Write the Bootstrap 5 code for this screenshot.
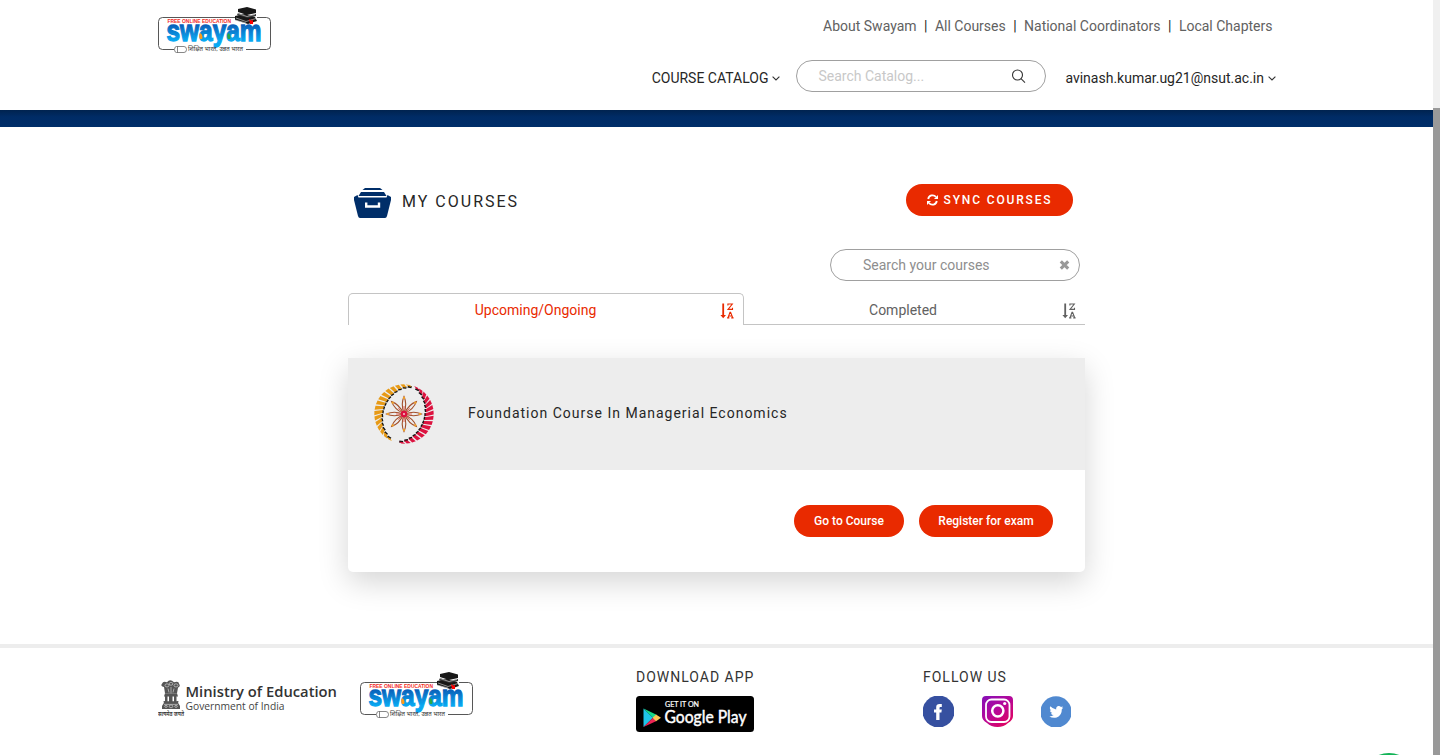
<!DOCTYPE html>
<html lang="en">
<head>
<meta charset="utf-8">
<meta name="viewport" content="width=device-width, initial-scale=1">
<title>My Courses - Swayam</title>
<link rel="stylesheet" href="https://cdn.jsdelivr.net/npm/bootstrap@5.3.0/dist/css/bootstrap.min.css">
<style>
  body { font-family: Roboto, "Liberation Sans", sans-serif; font-size: 14px; line-height: 20px; color: #262626; background: #fff; height: 755px; overflow: hidden; }
  svg { display: block; flex: none; }
  a { color: inherit; text-decoration: none; }
  .page { width: 1433px; height: 755px; }
  .scroll-track { width: 7px; height: 755px; background: #f0f0f0; padding-top: 108px; }
  .scroll-thumb { height: 647px; background: #999; }
  .site-header { height: 110px; padding: 5px 157px 0 158px; }
  .top-links { color: #616161; padding: 11px 3.500px 0 0; }
  .top-links span { color: #212121; width: 18.3px; text-align: center; }
  .main-nav { padding-top: 24px; }
  .search-pill { width: 250px; height: 32px; border: 1px solid #a0a0a0; border-radius: 16px; }
  .catalog-search { margin-left: 16px; padding: 0 19px 0 21px; color: #c8c8c8; }
  .course-search { margin-top: 31px; margin-right: 5px; padding: 0 9px 0 32px; color: #8e8e8e; }
  .account { margin-left: 19px; }
  .blue-bar { height: 17px; background: linear-gradient(#00234f, #002c66 7px, #002e69); }
  .content-col { width: 737px; height: 517px; padding-top: 57px; }
  .section-title { font-size: 16px; line-height: 22px; letter-spacing: 2px; margin-left: 11px; padding-top: 3px; }
  .btn-red { background: #e92a00; color: #fff; border: 0; border-radius: 16px; height: 32px; font-weight: 500; font-size: 12px; padding: 0; }
  .btn-red:hover { background: #c92400; color: #fff; }
  .btn-sync { width: 167px; letter-spacing: 1.85px; gap: 6px; }
  .tab-row { height: 32px; margin-top: 12px; }
  .tab-row svg { margin-top: 1px; }
  .tab-on { width: 396px; border: 1px solid #c4c4c4; border-bottom: 0; border-radius: 5px 5px 0 0; color: #e92a00; padding: 1px 9px 0 23px; }
  .tab-on span { margin: 0 30px 0 9px; }
  .tab-off { border-bottom: 1px solid #c4c4c4; padding: 3px 9px 0 0; color: #616161; }
  .course { margin-top: 33px; height: 214px; border-radius: 5px; box-shadow: 0 10px 30px rgba(0,0,0,.17); }
  .course-head { height: 112px; background: #ededed; padding-left: 26px; }
  .course-name { letter-spacing: 1px; margin-left: 34px; padding-bottom: 2px; }
  .course-actions { gap: 15px; padding: 35px 32px 0 0; }
  .site-footer { border-top: 4px solid #ededed; height: 111px; padding: 0 158px; }
  .foot-brand { width: 478px; padding-top: 22px; gap: 20px; }
  .foot-app { width: 287px; }
  .foot-label { letter-spacing: 1px; padding-top: 19px; margin-bottom: 9px; color: #333; }
  .socials { gap: 28px; }
  .chat-dot { position: fixed; left: 1362px; top: 753px; width: 54px; height: 54px; border-radius: 50%; background: #12b356; }
</style>
<script src="https://cdn.jsdelivr.net/npm/bootstrap@5.3.0/dist/js/bootstrap.bundle.min.js"></script>
</head>
<body>
<svg width="0" height="0" class="position-absolute">
  <defs>
    <linearGradient id="sw" x1="0" y1="0" x2="0" y2="1"><stop offset=".3" stop-color="#0a5fb8"/><stop offset=".8" stop-color="#08a9f2"/></linearGradient>
    <symbol id="swayam-logo" viewBox="0 0 114 50">
      <path d="M77 12.500H4.500Q.5 12.500 .5 16.500V40.500Q.5 44.500 4.500 44.500H16M88 44.500H108.500Q112.500 44.500 112.500 40.500V16.500Q112.500 12.500 108.500 12.500H99" fill="none" stroke="#444" stroke-width=".9"/>
      <path d="M18.500 41.500H26Q28.500 41.500 28.500 44.500T26 47.500H18.500Q16.500 47.500 16.500 44.500T18.500 41.500ZM19.500 41.500V47.500" fill="#fff" stroke="#555" stroke-width=".7"/>
      <text x="9.500" y="17.700" font-family="Liberation Sans, sans-serif" font-size="5.600" font-weight="700" fill="#f22a1e" textLength="63.500" lengthAdjust="spacingAndGlyphs">FREE ONLINE EDUCATION</text>
      <text x="8.500" y="36" font-family="Liberation Sans, sans-serif" font-size="29" font-weight="700" fill="url(#sw)" stroke="url(#sw)" stroke-width="1.300" textLength="95" lengthAdjust="spacingAndGlyphs">swayam</text>
      <path d="M42 34q-2-4 .5-6q3 3 1.500 6z" fill="#ff9c1a"/><path d="M70 34q-2-4 .5-6q3 3 1.500 6z" fill="#28a848"/>
      <path d="M80 4L89 2L98 4.500L98 8L89 10L80 7ZM77 11L86 9L97 12L99 16L90 19L77 15Z" fill="#171717"/>
      <path d="M80 8L89 11L98 9V11L90 13L79 10Z" fill="#333"/>
      <path d="M80 8.500L89 11.500L97 9.500M78 13L88 16.500L98 13.500M77 15L88 18" fill="none" stroke="#ddd" stroke-width=".6"/>
      <path d="M91 14L94 16L95 14V19H92Z" fill="#f00"/>
      <text x="30" y="46.400" font-family="Noto Sans, sans-serif" font-size="5.500" fill="#333" textLength="55" lengthAdjust="spacingAndGlyphs">शिक्षित भारत, उन्नत भारत</text>
    </symbol>
    <symbol id="sort-za" viewBox="0 0 14 16">
      <path d="M2.300 .500H4.100V12H6L3.200 15.200L.4 12H2.300Z" fill="currentColor"/>
      <path d="M7.900 2.600V1H12.300L8 6.400H12.500V4.700M7.100 14.900H9.400M11.200 14.900H13.600M8 14.700L10 9.400H10.600L12.700 14.700M8.800 13H11.900" fill="none" stroke="currentColor" stroke-width="1.100"/>
    </symbol>
    <symbol id="chev" viewBox="0 0 8 5"><path d="M.6 .6L4 4L7.400 .6" fill="none" stroke="#333" stroke-width="1.100"/></symbol>
  </defs>
</svg>

<div class="d-flex">
  <div class="page">
    <header class="site-header d-flex justify-content-between">
      <svg width="114" height="50"><use href="#swayam-logo"/></svg>
      <div class="d-flex flex-column">
        <nav class="top-links d-flex justify-content-end">
          <a href="#">About Swayam</a><span>|</span><a href="#">All Courses</a><span>|</span><a href="#">National Coordinators</a><span>|</span><a href="#">Local Chapters</a>
        </nav>
        <div class="main-nav d-flex justify-content-end">
          <a href="#" class="d-flex align-items-center pt-1">COURSE CATALOG <svg class="ms-1" width="8" height="5"><use href="#chev"/></svg></a>
          <div class="search-pill catalog-search d-flex align-items-center justify-content-between">
            <span>Search Catalog...</span>
            <svg width="15" height="15" fill="none" stroke="#333" stroke-width="1.100"><circle cx="6.500" cy="6" r="5"/><path d="M10 9.600L14 13.600"/></svg>
          </div>
          <a href="#" class="account d-flex align-items-center pt-1">avinash.kumar.ug21@nsut.ac.in <svg class="ms-1" width="8" height="5"><use href="#chev"/></svg></a>
        </div>
      </div>
    </header>
    <div class="blue-bar"></div>

    <main class="content-col mx-auto">
      <div class="d-flex align-items-start" style="padding:0 12px 0 6px">
        <svg class="mt-1" width="37" height="30" fill="#002e69"><path d="M11 0H26L28.500 2H8.500ZM7 4H30L32.500 8H4.500Z"/><path d="M0 9L3.500 7L4.500 9.500H32.500L33.500 7L37 9V12L33 28Q32.500 30 31 30H6Q4.500 30 4 28L0 12Z"/><path d="M12.200 14.500V18.500H25V14.500" fill="none" stroke="#fff" stroke-width="2.400"/></svg>
        <h1 class="section-title mb-0 fw-normal mt-1">MY COURSES</h1>
        <button class="btn btn-red btn-sync ms-auto d-flex align-items-center justify-content-center">
          <svg width="11" height="12" fill="none" stroke="#fff" stroke-width="1.800"><path d="M1.200 5A4.400 4.400 0 0 1 9 3M9.800 7A4.400 4.400 0 0 1 2 9"/><path d="M11 1V5H7ZM0 11V7H4Z" fill="#fff" stroke="none"/></svg>SYNC COURSES</button>
      </div>
      <div class="search-pill course-search d-flex align-items-center justify-content-between ms-auto">
        <span>Search your courses</span>
        <svg width="11" height="10"><path d="M1.800 1.300L9.200 8.700M9.200 1.300L1.800 8.700" stroke="#999" stroke-width="3.100"/></svg>
      </div>
      <div class="tab-row d-flex">
        <div class="tab-on d-flex align-items-center"><span class="flex-fill text-center">Upcoming/Ongoing</span><svg width="14" height="16"><use href="#sort-za"/></svg></div>
        <div class="tab-off flex-fill d-flex align-items-center"><span class="flex-fill text-center">Completed</span><svg width="14" height="16"><use href="#sort-za"/></svg></div>
      </div>
      <section class="course">
        <div class="course-head d-flex align-items-center">
          <svg id="seal" width="60" height="62" viewBox="0 0 60 62"></svg>
          <span class="course-name">Foundation Course In Managerial Economics</span>
        </div>
        <div class="course-actions d-flex justify-content-end">
          <button class="btn btn-red" style="width:110px">Go to Course</button>
          <button class="btn btn-red" style="width:134px">Register for exam</button>
        </div>
      </section>
    </main>

    <footer class="site-footer d-flex">
      <div class="foot-brand d-flex align-items-start">
        <svg width="182" height="48">
          <g transform="translate(0 7.500) scale(1 .79)">
          <g fill="#555"><path d="M6 12Q2 11 4 8Q5 4 9 6Q12 1 16 6Q21 4 21 8Q23 11 20 13L19 20H7Z"/><path d="M7 20H19L20 24H6Z M7 23H9.500V32H7ZM11 23H14.500V32H11ZM16 23H18.500V32H16Z"/><path d="M6 32Q4 29 8 30H18Q22 29 20 32L22 36V40H4V36Z"/></g>
          <g fill="none" stroke="#ccc" stroke-width=".8"><circle cx="9" cy="10" r="2"/><circle cx="13" cy="8" r="1.800"/><circle cx="18" cy="10" r="2"/><path d="M10 14L11 19M16 14L15 19M13 12V20M6 34H20"/><circle cx="13" cy="36.500" r="1.800"/><circle cx="8" cy="36.500" r="1.300"/><circle cx="18" cy="36.500" r="1.300"/></g>
          </g>
          <text x="0" y="46" font-family="Noto Sans, sans-serif" font-size="5.500" font-weight="600" fill="#333" textLength="26" lengthAdjust="spacingAndGlyphs">सत्यमेव जयते</text>
          <text x="27.500" y="27" font-family="Open Sans, sans-serif" font-size="14.500" font-weight="600" fill="#333" textLength="151.500" lengthAdjust="spacingAndGlyphs">Ministry of Education</text>
          <text x="27.500" y="39.500" font-family="Open Sans, sans-serif" font-size="10.500" fill="#444" textLength="99" lengthAdjust="spacingAndGlyphs">Government of India</text>
        </svg>
        <svg width="114" height="50"><use href="#swayam-logo"/></svg>
      </div>
      <div class="foot-app">
        <div class="foot-label">DOWNLOAD APP</div>
        <svg width="118" height="36">
          <rect width="118" height="36" rx="3.500" fill="#000"/>
          <path d="M7.500 12.500V31L17 21.800Z" fill="#1fc4e8"/><path d="M7.500 12.500L20.500 18.800L17 21.800Z" fill="#17d98a"/><path d="M7.500 31L20.500 25L17 21.800Z" fill="#ed2454"/><path d="M20 18.500L25 21.800L20 25.300L16.500 21.800Z" fill="#fdc654"/>
          <text x="29" y="11.300" font-family="Lato, sans-serif" font-size="7.200" fill="#fff" stroke="#fff" stroke-width=".2" textLength="34" lengthAdjust="spacingAndGlyphs">GET IT ON</text>
          <text x="28.500" y="27.300" font-family="Lato, sans-serif" font-size="16.500" fill="#fff" stroke="#fff" stroke-width=".45" textLength="82" lengthAdjust="spacingAndGlyphs">Google Play</text>
        </svg>
      </div>
      <div>
        <div class="foot-label">FOLLOW US</div>
        <div class="socials d-flex">
          <svg width="31" height="31"><circle cx="15.500" cy="15.500" r="16" fill="#3650a0"/><path d="M13.200 24V16.600H11V13.400H13.200V11.300Q13.200 8 16.500 8H18.800V11H17.300Q16.500 11 16.500 12V13.400H18.800L18.400 16.600H16.500V24Z" fill="#fff"/></svg>
          <svg width="31" height="31"><defs><linearGradient id="ig" x1="0" y1="0" x2=".8" y2="1"><stop stop-color="#8410b8"/><stop offset=".5" stop-color="#b5089a"/><stop offset="1" stop-color="#e3045c"/></linearGradient></defs><path d="M4 0H27Q31 0 31 4V20Q31 24 26 27Q22 31 15.500 31T5 27Q0 24 0 20V4Q0 0 4 0Z" fill="url(#ig)"/><g fill="none" stroke="#fff"><rect x="4" y="3.500" width="23.500" height="22.500" rx="5.500" stroke-width="1.800"/><circle cx="15.800" cy="14.800" r="5.600" stroke-width="2.500"/></g><circle cx="22.700" cy="7.500" r="1.600" fill="#fff"/></svg>
          <svg width="30" height="31"><circle cx="15" cy="16" r="15.700" fill="#5089d0"/><path transform="translate(8.300 9.500) scale(.87)" d="M16 2Q15 2.600 14.200 2.600Q15 2 15.500 .8Q14.500 1.400 13.400 1.600Q12 .2 10.300 .6Q7.500 1.300 7.900 4.500Q4 4.200 1.200 1Q-.3 4 2.200 5.800Q1.500 5.800 .7 5.400Q.8 8 3.400 8.700Q2.600 8.900 1.900 8.800Q2.600 10.900 5 11Q3 12.600 0 12.500Q4 15 8.500 13.700Q14.500 11.500 14.400 4.200Q15.300 3.500 16 2Z" fill="#fff"/></svg>
        </div>
      </div>
    </footer>
  </div>
  <div class="scroll-track"><div class="scroll-thumb"></div></div>
</div>
<div class="chat-dot"></div>
<script>
  // Institute seal: two tapering crescents of slanted strokes around an eight-petal flower
  const seal = document.getElementById('seal');
  const pt = (r, deg, cx = 30, cy = 31) => {
    const a = deg * Math.PI / 180;
    return (cx + r * Math.cos(a)).toFixed(1) + ' ' + (cy + r * Math.sin(a)).toFixed(1);
  };
  function crescent(start, end, color) {
    let out = '';
    const n = 16, step = (end - start) / n;
    for (let i = 0; i < n; i++) {
      const a = start + i * step, w = .8 + 7.5 * Math.sin(Math.PI * (i + .5) / n);
      out += `<path d="M${pt(28.4 - w, a + 4)}L${pt(28.4 - w, a + step * .8 + 4)}L${pt(30.4 - w, a + step + 2)}L${pt(30.4 - w, a + 5)}Z" fill="#111"/>`;
      out += `<path d="M${pt(29.7, a)}L${pt(29.7, a + step * .74)}L${pt(29.7 - w, a + step * .74 + 5)}L${pt(29.7 - w, a + 5)}Z" fill="${color}"/>`;
    }
    return out;
  }
  let art = crescent(114, 284, '#e79a16') + crescent(-70, 98, '#dc123f');
  for (let k = 0; k < 8; k++) {
    art += `<g transform="rotate(${k * 45} 30 31)" fill="none"><path d="M30 30Q26.500 21 30 13.500Q33.500 21 30 30Z" stroke="#a3502c" stroke-width="1.100"/><path d="M30 29V23" stroke="#e0524a" stroke-width=".8"/><circle cx="30" cy="15" r="1.200" fill="#efa02a"/></g>`;
  }
  seal.innerHTML = art + '<circle cx="30" cy="31" r="3.200" fill="#dc123f"/><circle cx="30" cy="31" r="1" fill="#f6c8cc"/>';
</script>
</body>
</html>
